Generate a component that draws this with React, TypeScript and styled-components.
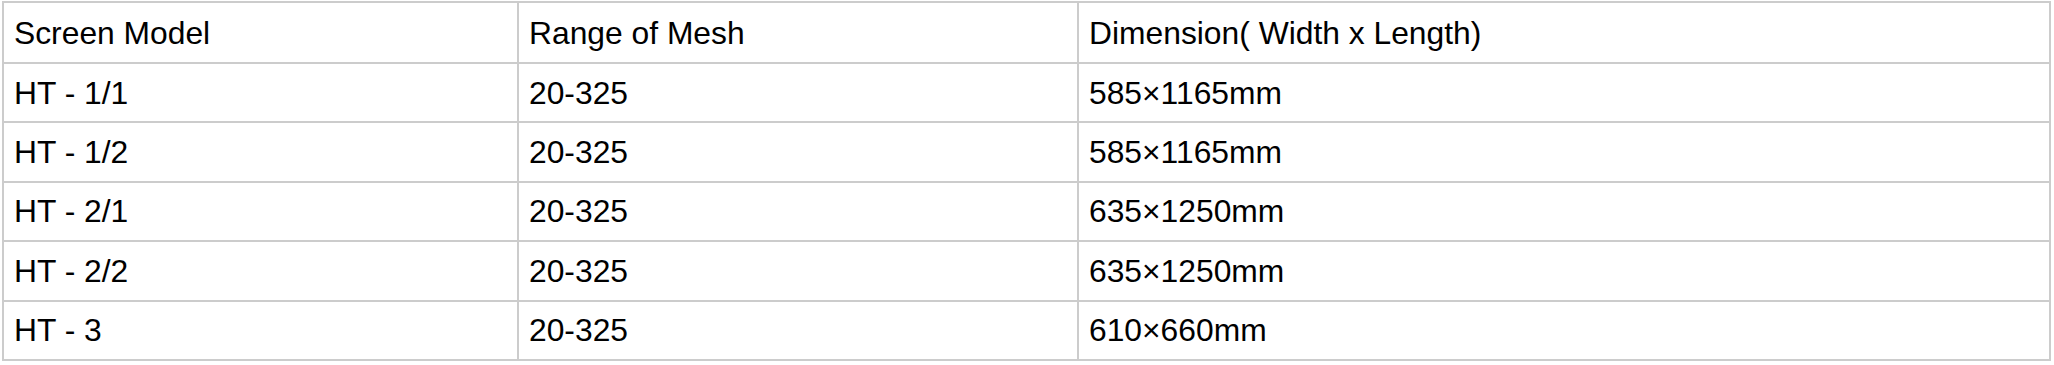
import styled, { createGlobalStyle } from "styled-components";

// ---------- Global Styles ----------
const GlobalStyle = createGlobalStyle`
  * { box-sizing: border-box; }
  body {
    margin: 0;
    background: #ffffff;
    font-family: "Liberation Sans", Arial, sans-serif;
  }
`;

// ---------- styled-components ----------
const S = {
  Page: styled.div`
    padding: 1px 0 0 2px;
  `,
  Table: styled.table`
    width: 2049px;
    border-collapse: collapse;
    table-layout: fixed;
    border: 2px solid #cccccc;
    color: #000000;
    font-size: 31.8px;
  `,
  Row: styled.tr<{ $head?: boolean }>`
    height: ${(p) => (p.$head ? 61 : 59.4)}px;
  `,
  Cell: styled.td`
    border: 2px solid #cccccc;
    padding: 0 10px;
    vertical-align: middle;
    line-height: 36px;
    font-weight: normal;
    text-align: left;
    white-space: nowrap;
  `,
};

// ---------- data ----------
const header = ["Screen Model", "Range of Mesh", "Dimension( Width x Length)"];

const rows: [string, string, string][] = [
  ["HT - 1/1", "20-325", "585×1165mm"],
  ["HT - 1/2", "20-325", "585×1165mm"],
  ["HT - 2/1", "20-325", "635×1250mm"],
  ["HT - 2/2", "20-325", "635×1250mm"],
  ["HT - 3", "20-325", "610×660mm"],
];

// ---------- component ----------
export default function App() {
  return (
    <>
      <GlobalStyle />
      <S.Page>
        <S.Table>
          <colgroup>
            <col style={{ width: 515 }} />
            <col style={{ width: 560 }} />
            <col />
          </colgroup>
          <tbody>
            <S.Row $head>
              {header.map((h) => (
                <S.Cell key={h}>{h}</S.Cell>
              ))}
            </S.Row>
            {rows.map((r, i) => (
              <S.Row key={i}>
                {r.map((c, j) => (
                  <S.Cell key={j}>{c}</S.Cell>
                ))}
              </S.Row>
            ))}
          </tbody>
        </S.Table>
      </S.Page>
    </>
  );
}
